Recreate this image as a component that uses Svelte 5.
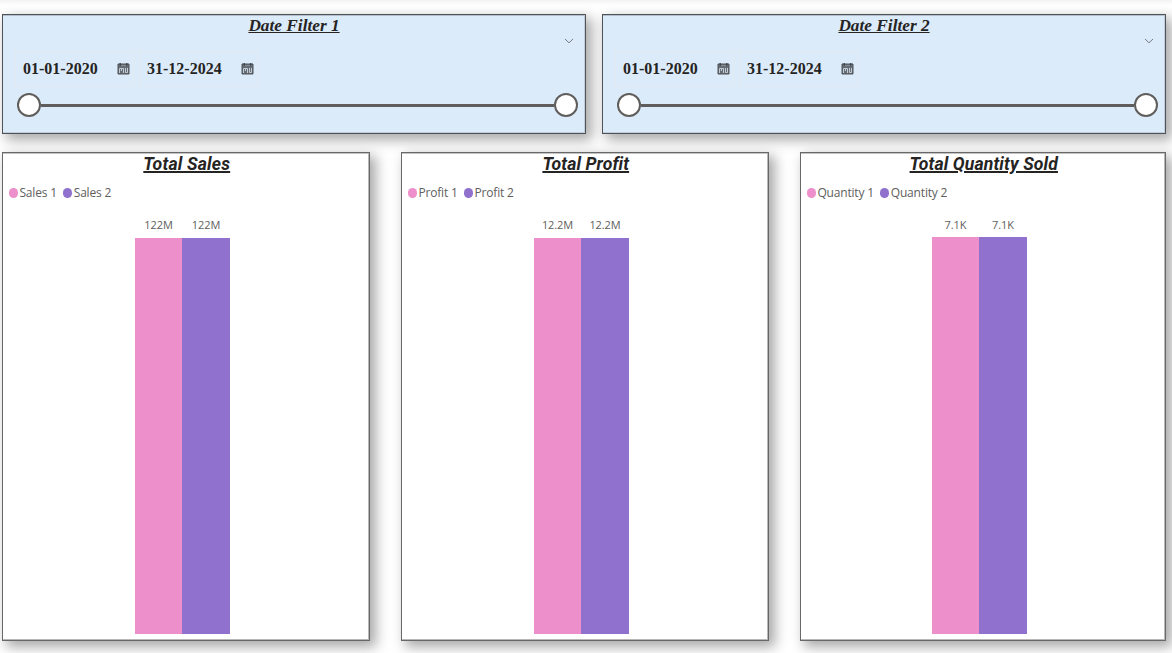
<script>
  const filters = ['Date Filter 1', 'Date Filter 2'];
  const dates = ['01-01-2020', '31-12-2024'];
  const charts = [
    { title: 'Total Sales', series: ['Sales 1', 'Sales 2'], value: '122M', height: 396, titleSpacing: 0.2 },
    { title: 'Total Profit', series: ['Profit 1', 'Profit 2'], value: '12.2M', height: 396, titleSpacing: 0.1 },
    { title: 'Total Quantity Sold', series: ['Quantity 1', 'Quantity 2'], value: '7.1K', height: 397, titleSpacing: 0.14 }
  ];
</script>

<main>
  <section class="filters">
    {#each filters as name}
      <article class="card filter">
        <h2>{name}</h2>
        <svg class="chevron" width="10" height="6" viewBox="0 0 10 6"><path d="M1 1 L5 4.8 L9 1" fill="none" stroke="#777b80" stroke-width="1" /></svg>
        <div class="dates">
          {#each dates as date}
            <div class="field">
              <span>{date}</span>
              <svg width="13" height="12" viewBox="0 0 13 12">
                <path d="M1 1H12V11H1Z" fill="#666d75" stroke="#4e5359" />
                <path d="M2 2.5H11" stroke="#858e97" />
                <path d="M3.2 0V3M9.8 0V3" stroke="#3e4348" stroke-width="1.3" />
                <path d="M2.5 10V5.5H4.5V8M4.5 5.5H6.5V10M8.5 5V9.5H10.5V5" fill="none" stroke="#ccd7e1" stroke-width=".9" />
              </svg>
            </div>
          {/each}
        </div>
        <div class="slider"><i></i><b></b><i></i></div>
      </article>
    {/each}
  </section>

  <section class="charts">
    {#each charts as chart}
      <article class="card chart">
        <h3 style="letter-spacing: {chart.titleSpacing}px">{chart.title}</h3>
        <div class="legend">
          {#each chart.series as label}
            <span><i></i>{label}</span>
          {/each}
        </div>
        <div class="plot">
          {#each chart.series as label}
            <div class="column">
              <span style="margin-bottom: {402 - chart.height}px">{chart.value}</span>
              <div class="bar" style="height: {chart.height}px"></div>
            </div>
          {/each}
        </div>
      </article>
    {/each}
  </section>
</main>

<style>
  :global(body) { margin: 0; background: #fff; overflow: hidden; }
  main {
    box-sizing: border-box;
    width: 1172px;
    height: 653px;
    padding: 14px 6px 0 2px;
    overflow: hidden;
    background: linear-gradient(#f2f2f2, #fff 5px);
  }
  .filters { display: grid; grid-template-columns: 584px 564px; gap: 16px; }
  .charts { display: grid; grid-template-columns: 368px 368px 366px; gap: 31px; margin-top: 18px; }
  .card {
    box-sizing: border-box;
    border: 1px solid #686868;
    background: #fff;
    box-shadow: 5px 5px 12px 1px rgba(0, 0, 0, 0.34), inset -1px -1px #b8b8b8, inset 0 1px #c4c4c4;
  }
  .filter {
    display: flex;
    flex-direction: column;
    height: 120px;
    background: #dcebfa;
    border-color: #4f5358;
    box-shadow: 5px 5px 12px 1px rgba(0, 0, 0, 0.34), inset -1px -1px #c0ceda, inset 0 1px #b3bfca;
  }
  h2 {
    margin: 1px 0 0;
    text-align: center;
    font: italic 700 17.3px/20px "Liberation Serif", serif;
    color: #252423;
    text-decoration: underline;
  }
  .chevron { align-self: flex-end; margin: 2px 11.5px 0 0; }
  .dates { display: flex; gap: 5px; margin: 7px 0 0 12px; }
  .field {
    box-sizing: border-box;
    display: flex;
    align-items: center;
    justify-content: space-between;
    width: 119px;
    height: 36px;
    padding: 0 3px 0 7px;
    border: 1px solid #e1eaf1;
    font: 700 16px/20px "Liberation Serif", serif;
    color: #252423;
  }
  .field svg { margin-top: -1px; }
  .slider { display: flex; align-items: center; margin: 6px 7.5px 0 14px; }
  .slider i { box-sizing: border-box; width: 24px; height: 24px; border: 2px solid #605e5c; border-radius: 50%; background: #fff; }
  .slider b { flex: 1; height: 3px; background: #605e5c; }
  .chart { display: flex; flex-direction: column; height: 489px; }
  h3 {
    margin: 1px 0 0 1.5px;
    text-align: center;
    font: italic 700 17.6px/20px Roboto, sans-serif;
    color: #252423;
    text-decoration: underline;
    text-decoration-thickness: 2px;
    text-underline-offset: 1px;
  }
  .legend { display: flex; gap: 6px; margin: 10px 0 0 5.5px; font: 12px/18px "Open Sans", sans-serif; letter-spacing: -0.18px; color: #605e5c; }
  .legend span { display: flex; align-items: center; gap: 1.5px; }
  .legend i { width: 9.4px; height: 9.4px; border-radius: 50%; background: #ed8fca; }
  .legend span + span i { background: #9071ce; }
  .plot { display: flex; flex: 1; align-items: flex-end; justify-content: center; padding: 0 7.5px 6px 0; }
  .column { width: 47.5px; text-align: center; font: 11px/14px "Open Sans", sans-serif; letter-spacing: -0.1px; color: #605e5c; }
  .column span { display: block; }
  .bar { background: #ed8fca; }
  .column + .column .bar { background: #9071ce; }
</style>
